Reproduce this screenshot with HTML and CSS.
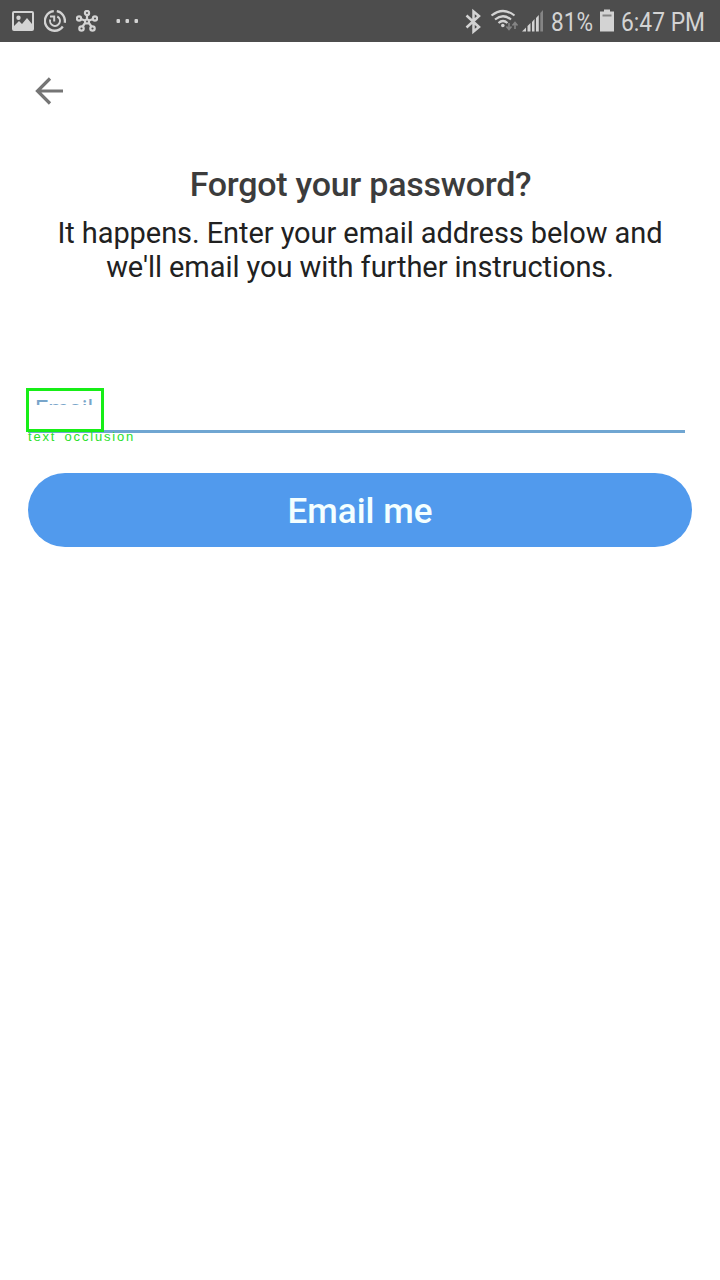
FILE: index.html
```html
<!DOCTYPE html>
<html lang="en">
<head>
<meta charset="utf-8">
<title>Forgot your password?</title>
<link rel="stylesheet" href="styles.css">
</head>
<body>
<header class="status">
  <div class="status-left">
    <svg width="22" height="20" viewBox="0 0 22 20"><path fill="currentColor" fill-rule="evenodd" d="M2 0h18q2 0 2 2v16q0 2-2 2H2q-2 0-2-2V2q0-2 2-2zM2 2v13l5-5 3 3 5-6 5 6V2zM6.500 4.500a2.200 2.200 0 1 1 0 4.400a2.200 2.200 0 1 1 0-4.400z"/></svg>
    <svg width="22" height="24" viewBox="0 0 22 24" fill="none" stroke="currentColor" stroke-width="2.300"><path d="M9.800 2.200A9.800 9.800 0 1 0 18.800 17.500M12.800 2.200A9.800 9.800 0 0 1 20.700 13.800"/><path d="M13.300 7.500A5 5 0 1 1 6.200 10.500M6 7.500H10.200V12.500" stroke-width="2"/></svg>
    <svg width="22" height="22" viewBox="0 0 22 22" fill="none" stroke="currentColor" stroke-width="2.200"><path d="M11 5v4M4.800 9l4.200 1.500M17.200 9L13 10.500M6.500 16.500l3-4M15.500 16.500l-3-4"/><circle cx="11" cy="11.500" r="2"/><circle cx="11" cy="3" r="2.100"/><circle cx="3" cy="8.500" r="2.100"/><circle cx="19" cy="8.500" r="2.100"/><circle cx="5.500" cy="18.500" r="2.200"/><circle cx="16.500" cy="18.500" r="2.200"/></svg>
    <svg class="more" width="24" height="4" viewBox="0 0 24 4" fill="currentColor"><rect x="0.500" width="3.500" height="4" rx="1"/><rect x="9.500" width="3.500" height="4" rx="1"/><rect x="18.500" width="3.500" height="4" rx="1"/></svg>
  </div>
  <svg class="status-right" width="265" height="42" viewBox="455 0 265 42" fill="none" stroke="currentColor">
    <path stroke-width="2.500" d="M466.500 15.500L479 27l-5.500 4.500V11.500L479 16l-12.500 11.500"/>
    <path stroke-width="2.200" d="M491.500 15.500q11.500-9 23 0M495 19.500q8-6.500 16 0M498.500 23q4.500-4 9 0"/>
    <circle cx="502.800" cy="25.500" r="1.800" fill="currentColor" stroke="none"/>
    <path class="dim" stroke-width="1.600" d="M509 23v6M506.500 26.500l2.500 3 2.500-3M515 29v-6M512.500 25.500l2.500-3 2.500 3"/>
    <path fill="currentColor" stroke="none" d="M522 31.500l4-4v4zM527.500 26l3-3v8.500h-3zM532 22l2.500-3v12.500H532zM536 18l2.800-3v16.500H536z"/>
    <path class="dim-fill" stroke="none" d="M540.300 13l2.700-3v21.500h-2.700z"/>
    <text x="551" y="31" textLength="42" lengthAdjust="spacingAndGlyphs">81%</text>
    <path fill="currentColor" stroke="none" d="M604 9.500h6v2h4V31.500h-14v-20h4z"/>
    <path class="charge" stroke-width="2" d="M602.500 15.500h9"/>
    <text x="621" y="31" textLength="84" lengthAdjust="spacingAndGlyphs">6:47 PM</text>
  </svg>
</header>
<nav class="toolbar">
  <svg width="28" height="28" viewBox="0 0 28 28" fill="none" stroke="currentColor" stroke-width="3.200"><path d="M28 14H2.500M15 1.500L2.500 14 15 26.500"/></svg>
</nav>
<main class="content">
  <h1>Forgot your password?</h1>
  <p class="lead">It happens. Enter your email address below and<br>we'll email you with further instructions.</p>
  <div class="field">
    <label class="field-label">Email</label>
    <div class="marker">
      <svg width="112" height="18" viewBox="0 0 112 18"><text x="1" y="12">text occlusion</text></svg>
    </div>
  </div>
  <button class="submit">Email me</button>
</main>
</body>
</html>
```
FILE: styles.css
```css
* { box-sizing: border-box; }
body { margin: 0; min-height: 1280px; background: #fff; font-family: Roboto, sans-serif; }
svg { display: block; flex: none; }
.status { display: flex; justify-content: space-between; height: 42px; background: #4d4d4d; color: #d3d3d3; }
.status-left { display: flex; align-items: center; gap: 10px; padding-left: 12px; }
.more { margin-left: 8px; }
.status-right text { font-size: 26px; fill: currentColor; stroke: none; }
.status-right .dim { stroke: #858585; }
.status-right .dim-fill { fill: #858585; }
.status-right .charge { stroke: #858585; }
.toolbar { height: 98px; padding: 35px 35px 0; color: #757575; }
.content { padding: 24px 28px 0; text-align: center; }
h1 { margin: 0; font-size: 34px; line-height: 40px; font-weight: 500; letter-spacing: -0.26px; text-indent: 1px; color: #3c3c3c; }
.lead { margin: 12px -20px 0; font-size: 29px; line-height: 34px; letter-spacing: -0.07px; color: #212121; white-space: nowrap; }
.field { position: relative; height: 49px; margin: 100px 7px 0 0; border-bottom: 3px solid #70a6d2; text-align: left; }
.field-label { display: block; height: 21px; padding-left: 7px; overflow: hidden; font-size: 23.500px; line-height: 50px; color: #78a5ca; }
.marker { position: absolute; left: -2px; top: 4px; width: 78px; height: 44px; border: 3px solid #17ee17; }
.marker svg { position: absolute; left: -2px; top: 38px; overflow: visible; }
.marker text { font-family: "Liberation Sans", sans-serif; font-size: 13px; letter-spacing: 1.8px; word-spacing: 3px; fill: #2be02b; }
.submit { display: block; width: 100%; height: 74px; margin-top: 40px; padding: 3px 0 0; border: 0; border-radius: 37px; background: #519aed; color: #f4ffff; font: 500 35px/71px Roboto, sans-serif; }
```
